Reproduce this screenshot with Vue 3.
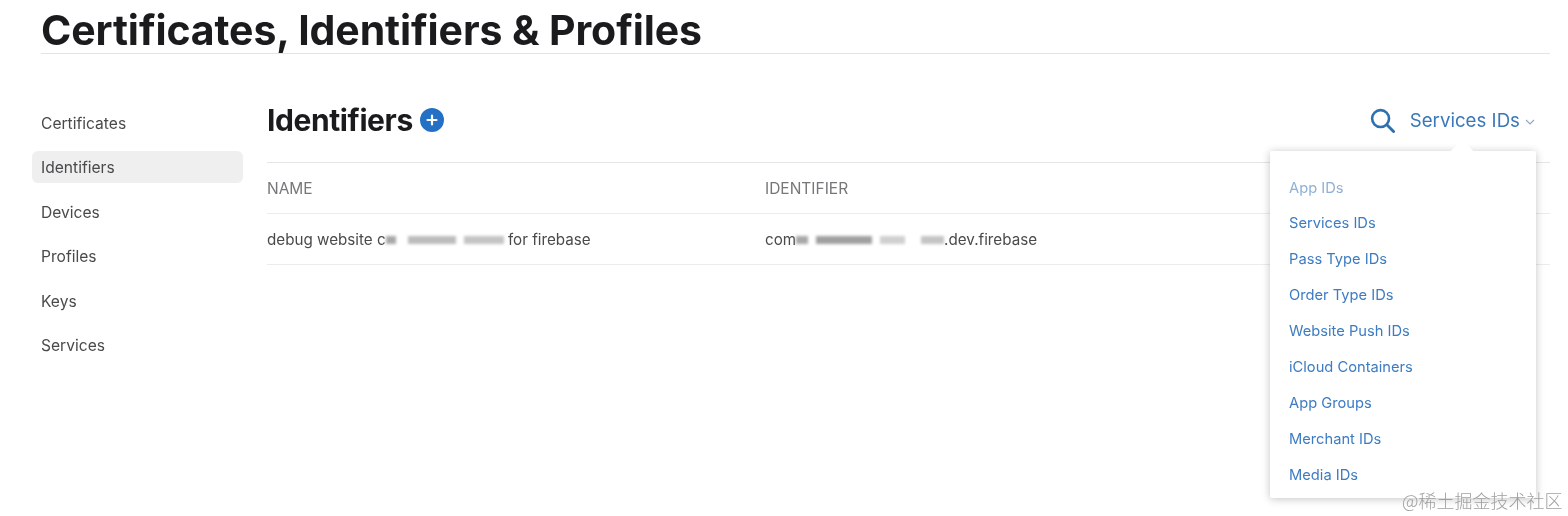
<script setup>
const navItems = ["Certificates", "Identifiers", "Devices", "Profiles", "Keys", "Services"];
const menuItems = [
  "App IDs",
  "Services IDs",
  "Pass Type IDs",
  "Order Type IDs",
  "Website Push IDs",
  "iCloud Containers",
  "App Groups",
  "Merchant IDs",
  "Media IDs",
];
</script>

<template>
  <div class="page">
    <h1 class="title">Certificates, Identifiers &amp; Profiles</h1>
    <div class="content">
      <nav class="sidebar">
        <a
          v-for="item in navItems"
          :key="item"
          class="nav-item"
          :class="{ active: item === 'Identifiers' }"
          >{{ item }}</a
        >
      </nav>
      <main class="main">
        <div class="main-head">
          <h2>Identifiers</h2>
          <svg class="plus" width="24" height="24" viewBox="0 0 24 24">
            <circle cx="12" cy="12" r="12" fill="#2470c4" />
            <path d="M12 7.5v9M7.5 12h9" stroke="#fff" stroke-width="2.2" stroke-linecap="round" />
          </svg>
          <div class="filter">
            <svg class="search" width="25" height="25" viewBox="0 0 26 26" fill="none">
              <circle cx="11" cy="11" r="8.8" stroke="#2e6fb0" stroke-width="2.7" />
              <path d="M17.5 17.5l7 7" stroke="#2e6fb0" stroke-width="3" stroke-linecap="round" />
            </svg>
            <span class="filter-label">Services IDs</span>
            <svg class="chevron" width="10" height="6" viewBox="0 0 10 6" fill="none">
              <path d="M1 1l4 4 4-4" stroke="#8fa6bf" stroke-width="1.1" />
            </svg>
          </div>
        </div>
        <div class="row head-row">
          <span class="col-name">NAME</span>
          <span>IDENTIFIER</span>
        </div>
        <div class="row">
          <span class="col-name">
            debug website c<i class="smudge s0"></i><i class="smudge s1"></i><i class="smudge s2"></i> for firebase
          </span>
          <span>
            com<i class="smudge s3"></i><i class="smudge s4"></i><i class="smudge s5"></i><i class="smudge s6"></i>.dev.firebase
          </span>
        </div>
      </main>
    </div>

    <div class="menu">
      <span class="menu-arrow"></span>
      <a
        v-for="(item, i) in menuItems"
        :key="item"
        class="menu-item"
        :class="{ current: i === 0 }"
        >{{ item }}</a
      >
    </div>

    <div class="watermark">@稀土掘金技术社区</div>
  </div>
</template>

<style>
html,
body {
  margin: 0;
  background: #fff;
}
</style>

<style scoped>
.page {
  position: relative;
  width: 1568px;
  height: 516px;
  overflow: hidden;
  box-sizing: border-box;
  padding: 0 18px 0 41px;
  background: #fff;
  font-family: Inter, "Noto Sans", sans-serif;
  color: #4a4a4c;
  filter: blur(0.4px);
}

.title {
  margin: 0;
  height: 54px;
  box-sizing: border-box;
  padding-top: 6px;
  border-bottom: 1px solid #e4e4e4;
  font-size: 41px;
  line-height: 48px;
  font-weight: 700;
  letter-spacing: -0.1px;
  color: #1b1b1d;
  white-space: nowrap;
}

.content {
  display: flex;
  padding-top: 46px;
}

.sidebar {
  width: 235px;
  margin-left: -9px;
  padding-top: 6.5px;
  display: flex;
  flex-direction: column;
  gap: 12.6px;
}

.nav-item {
  height: 32px;
  line-height: 33px;
  padding-left: 9px;
  width: 202px;
  border-radius: 6px;
  font-size: 15.6px;
}

.nav-item.active {
  background: #efefef;
}

.main {
  flex: 1;
}

.main-head {
  display: flex;
  align-items: center;
  box-sizing: border-box;
  height: 63px;
  padding-bottom: 22px;
  border-bottom: 1px solid #e6e6e6;
  color: #1b1b1d;
}

.main-head h2 {
  margin: 0;
  font-size: 30px;
  font-weight: 700;
  letter-spacing: -0.4px;
  white-space: nowrap;
}

.plus {
  margin-left: 7px;
}

.filter {
  margin-left: auto;
  margin-right: 15px;
  display: flex;
  align-items: center;
  color: #3b78b8;
}

.filter-label {
  margin-left: 15px;
  font-size: 18.7px;
}

.chevron {
  margin-left: 5px;
  margin-top: 3px;
}

.row {
  display: flex;
  align-items: center;
  height: 50px;
  border-bottom: 1px solid #ececec;
  font-size: 15.2px;
  white-space: nowrap;
}

.head-row {
  color: #77777a;
  font-size: 15.5px;
}

.col-name {
  width: 498px;
}

.smudge {
  display: inline-block;
  height: 8px;
  background: #a8a8a8;
  filter: blur(1.5px);
  vertical-align: middle;
}

.s0 {
  width: 10px;
  margin-right: 12px;
}

.s1 {
  width: 48px;
  margin-right: 8px;
  background: #bcbcbc;
}

.s2 {
  width: 40px;
  background: #c4c4c4;
}

.s3 {
  width: 12px;
  margin-right: 8px;
}

.s4 {
  width: 56px;
  margin-right: 8px;
  background: #a0a0a0;
}

.s5 {
  width: 25px;
  margin-right: 16px;
  background: #d0d0d0;
}

.s6 {
  width: 23px;
  background: #c4c4c4;
}

.menu {
  position: absolute;
  left: 1270px;
  top: 151px;
  width: 266px;
  height: 347px;
  box-sizing: border-box;
  padding: 19.5px 19px 0;
  display: flex;
  flex-direction: column;
  background: #fff;
  box-shadow: 0 1px 9px rgba(0, 0, 0, 0.24);
  border-radius: 2px;
}

.menu-arrow {
  position: absolute;
  left: 184px;
  top: -8px;
  width: 16px;
  height: 16px;
  background: #fff;
  transform: rotate(45deg);
}

.menu-item {
  height: 35.9px;
  line-height: 35.9px;
  font-size: 14.7px;
  color: #3d7cc2;
  position: relative;
}

.menu-item.current {
  color: #8fb0d6;
}

.watermark {
  position: absolute;
  left: 1402px;
  top: 487px;
  font-family: "Noto Sans CJK SC", sans-serif;
  font-size: 18px;
  line-height: 26px;
  font-weight: 300;
  color: #a0a0a0;
  white-space: nowrap;
}
</style>
